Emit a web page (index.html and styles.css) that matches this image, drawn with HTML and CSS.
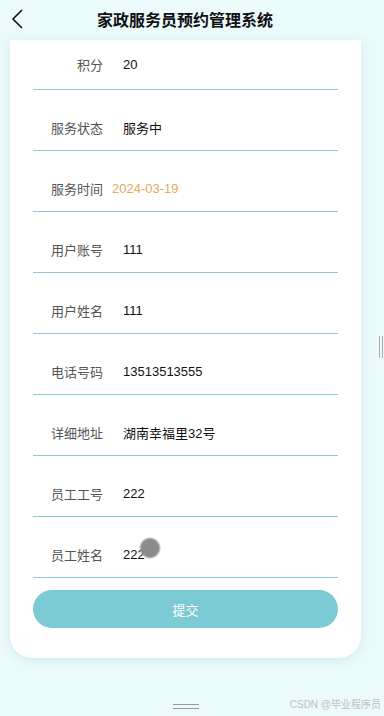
FILE: index.html
```html
<!DOCTYPE html>
<html lang="zh-CN">
<head>
  <meta charset="UTF-8" />
  <meta name="viewport" content="width=device-width, initial-scale=1.0"/>
  <title>家政服务员预约管理系统</title>
  <link rel="stylesheet" href="styles.css">
</head>
<body>
  <div class="header">
    <svg class="back" width="14" height="20" viewBox="0 0 14 20">
      <path d="M11 1 L2 10 L11 19" fill="none" stroke="#111" stroke-width="1.6"/>
    </svg>
    <h1>家政服务员预约管理系统</h1>
  </div>

  <div class="card">
    <div class="row row-first"><span class="label">积分</span><span class="value">20</span></div>
    <div class="row"><span class="label">服务状态</span><span class="value">服务中</span></div>
    <div class="row"><span class="label">服务时间</span><span class="value date">2024-03-19</span></div>
    <div class="row"><span class="label">用户账号</span><span class="value">111</span></div>
    <div class="row"><span class="label">用户姓名</span><span class="value">111</span></div>
    <div class="row"><span class="label">电话号码</span><span class="value">13513513555</span></div>
    <div class="row"><span class="label">详细地址</span><span class="value">湖南幸福里32号</span></div>
    <div class="row"><span class="label">员工工号</span><span class="value">222</span></div>
    <div class="row"><span class="label">员工姓名</span><span class="value">222</span></div>
    <button class="submit">提交</button>
  </div>

  <div class="cursor"></div>
  <div class="scroll-grip"></div>
  <div class="home-bar"></div>
  <div class="watermark">CSDN @毕业程序员</div>
</body>
</html>
```

FILE: styles.css
```css
body {
  margin: 0;
  width: 384px;
  height: 716px;
  overflow: hidden;
  position: relative;
  background: #ebfafb;
  font-family: "Liberation Sans", "Noto Sans CJK SC", sans-serif;
  color: #222;
}

.header {
  height: 40px;
  display: flex;
  align-items: center;
  justify-content: center;
  padding-right: 14px;
  position: relative;
}

.header h1 {
  margin: -2px 0 0;
  font-size: 16px;
  font-weight: bold;
  color: #111;
}

.back {
  position: absolute;
  left: 11px;
  top: 9px;
}

.card {
  margin: 0 23px 0 10px;
  background: #fff;
  border-radius: 0 0 22px 22px;
  padding: 0 23px 30px;
  box-shadow: 0 2px 8px rgba(150, 210, 215, 0.35);
}

.row {
  display: flex;
  align-items: center;
  height: 20px;
  padding: 27px 0 13px;
  border-bottom: 1px solid #8fcbd2;
  font-size: 13px;
}

.row-first {
  padding-top: 14px;
  padding-bottom: 15px;
}

.label {
  width: 70px;
  text-align: right;
  color: #555;
}

.value {
  margin-left: 20px;
  color: #111;
}

.value.date {
  margin-left: 9px;
  color: #e9a95b;
}

.submit {
  display: block;
  width: 100%;
  height: 38px;
  margin-top: 12px;
  border: none;
  border-radius: 19px;
  background: #7ccbd4;
  color: #fff;
  font-family: inherit;
  font-size: 13px;
}

.cursor {
  position: absolute;
  left: 139px;
  top: 537px;
  width: 22px;
  height: 22px;
  border-radius: 50%;
  background: radial-gradient(circle, #8c8c8c 55%, rgba(140, 140, 140, 0) 72%);
}

.scroll-grip {
  position: absolute;
  left: 379px;
  top: 336px;
  width: 2px;
  height: 22px;
  border-left: 1px solid #aaa;
  border-right: 1px solid #aaa;
}

.home-bar {
  position: absolute;
  left: 173px;
  top: 704px;
  width: 26px;
  height: 3px;
  border-top: 1.5px solid #999;
  border-bottom: 1.5px solid #999;
}

.watermark {
  position: absolute;
  right: 3px;
  top: 696px;
  font-size: 10px;
  color: #c2c2c2;
  white-space: nowrap;
}
```
